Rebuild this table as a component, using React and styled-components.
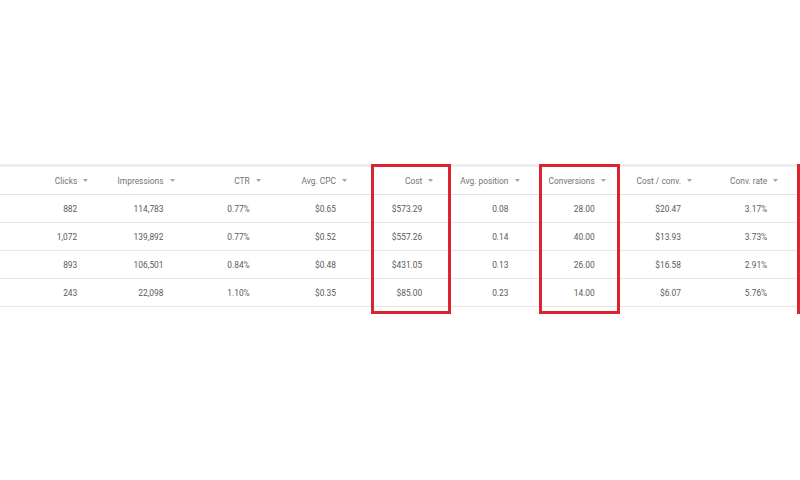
import React from "react";
import styled, { createGlobalStyle } from "styled-components";

const Global = createGlobalStyle`
  html, body { margin: 0; padding: 0; background: #ffffff; }
  body { font-family: Roboto, "Liberation Sans", Arial, sans-serif; }
`;

const Page = styled.div`
  width: 800px;
  height: 480px;
  overflow: hidden;
  padding-top: 164px;
  box-sizing: border-box;
`;

const Table = styled.div`
  display: flex;
  border-top: 3px solid #ededed;
`;

const Column = styled.div`
  position: relative;
  display: flex;
  flex-direction: column;
  width: ${(p) => p.$w}px;
  flex: none;

  ${(p) =>
    p.$box
      ? `
  &::after {
    content: "";
    position: absolute;
    z-index: 2;
    top: -3px;
    bottom: -7px;
    left: ${p.$box[0]}px;
    right: ${p.$box[1]}px;
    border: 3px solid #da2430;
    pointer-events: none;
  }`
      : ""}
`;

const HeaderCell = styled.div`
  height: 28px;
  box-sizing: border-box;
  border-bottom: 1px solid #e2e2e2;
  display: flex;
  align-items: center;
  justify-content: flex-end;
  gap: 6px;
  padding-right: 15px;
  font-size: 8.4px;
  color: #747474;
  white-space: nowrap;
`;

const Cell = styled.div`
  height: 28px;
  box-sizing: border-box;
  border-bottom: 1px solid #e6e6e6;
  display: flex;
  align-items: center;
  justify-content: flex-end;
  padding-right: 26px;
  font-size: 8.4px;
  color: #5a5a5a;
  white-space: nowrap;
`;

const SortArrow = () => (
  <svg width="5" height="3" viewBox="0 0 5 3">
    <path d="M0 0 L5 0 L2.5 3 Z" fill="#a6a6a6" />
  </svg>
);

const columns = [
  { h: "Clicks", v: ["882", "1,072", "893", "243"] },
  { h: "Impressions", v: ["114,783", "139,892", "106,501", "22,098"] },
  { h: "CTR", v: ["0.77%", "0.77%", "0.84%", "1.10%"] },
  { h: "Avg. CPC", v: ["$0.65", "$0.52", "$0.48", "$0.35"] },
  { h: "Cost", v: ["$573.29", "$557.26", "$431.05", "$85.00"], box: [9, -3] },
  { h: "Avg. position", v: ["0.08", "0.14", "0.13", "0.23"] },
  { h: "Conversions", v: ["28.00", "40.00", "26.00", "14.00"], box: [4, 1] },
  { h: "Cost / conv.", v: ["$20.47", "$13.93", "$16.58", "$6.07"] },
  { h: "Conv. rate", v: ["3.17%", "3.73%", "2.91%", "5.76%"] },
];

export default function App() {
  return (
    <>
      <Global />
      <Page>
        <Table>
          <Column $w={17}>
            <HeaderCell />
            {[0, 1, 2, 3].map((i) => (
              <Cell key={i} />
            ))}
          </Column>
          {columns.map((c) => (
            <Column key={c.h} $w={86.25} $box={c.box}>
              <HeaderCell>
                <span>{c.h}</span>
                <SortArrow />
              </HeaderCell>
              {c.v.map((val, i) => (
                <Cell key={i}>{val}</Cell>
              ))}
            </Column>
          ))}
          <Column $w={7} $box={[4, -10]}>
            <HeaderCell />
            {[0, 1, 2, 3].map((i) => (
              <Cell key={i} />
            ))}
          </Column>
        </Table>
      </Page>
    </>
  );
}
